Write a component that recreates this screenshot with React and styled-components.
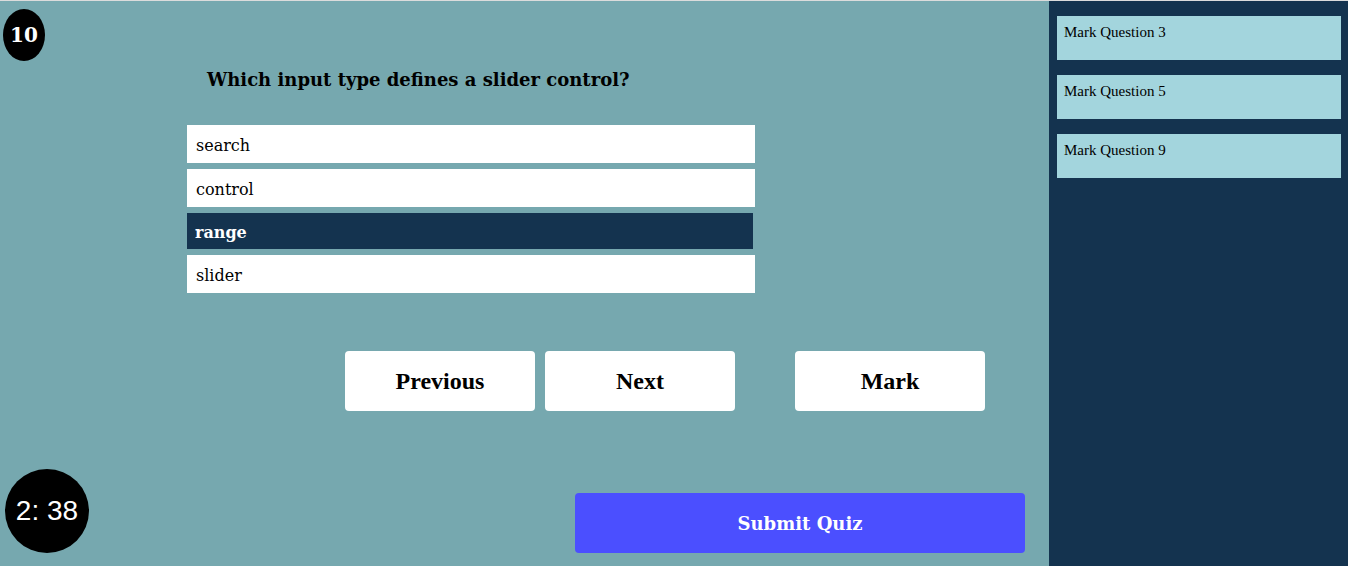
import React, { useState } from 'react';
import styled, { createGlobalStyle } from 'styled-components';

const GlobalStyle = createGlobalStyle`
  html, body {
    margin: 0;
    padding: 0;
    background: #dcdcdc;
  }
  body {
    padding-top: 1px;
    font-family: "DejaVu Serif", "Liberation Serif", serif;
  }
`;

const Page = styled.div`
  display: flex;
  height: 565px;
  overflow: hidden;
`;

const Main = styled.main`
  flex: 1;
  display: flex;
  flex-direction: column;
  background: #76a8af;
`;

const Badge = styled.div`
  width: 42px;
  height: 52px;
  margin: 8px 0 0 3px;
  border-radius: 50%;
  background: #000;
  color: #fff;
  display: flex;
  align-items: center;
  justify-content: center;
  font-family: "DejaVu Serif", serif;
  font-weight: bold;
  font-size: 20px;
`;

const Question = styled.h2`
  margin: 8px 0 0 207px;
  font-size: 18px;
  line-height: 22px;
  font-weight: bold;
  color: #000;
`;

const Options = styled.div`
  display: flex;
  flex-direction: column;
  gap: 6px;
  margin: 34px 0 0 187px;
  width: 568px;
`;

const Option = styled.div`
  box-sizing: border-box;
  height: ${(p) => (p.$selected ? '36px' : '38px')};
  width: ${(p) => (p.$selected ? '566px' : '568px')};
  padding: 2px 0 0 ${(p) => (p.$selected ? '8px' : '9px')};
  display: flex;
  align-items: center;
  background: ${(p) => (p.$selected ? '#14334f' : '#fff')};
  color: ${(p) => (p.$selected ? '#fff' : '#000')};
  font-size: 16px;
  font-weight: ${(p) => (p.$selected ? 'bold' : 'normal')};
  cursor: pointer;
`;

const Controls = styled.div`
  display: flex;
  margin: 58px 0 0 345px;
  gap: 10px;
`;

const NavButton = styled.button`
  width: 190px;
  height: 60px;
  margin-left: ${(p) => (p.$spaced ? '50px' : '0')};
  border: none;
  border-radius: 4px;
  background: #fff;
  color: #000;
  font-family: "Liberation Serif", serif;
  font-weight: bold;
  font-size: 24px;
  cursor: pointer;
`;

const Footer = styled.div`
  margin-top: auto;
  display: flex;
  align-items: flex-end;
  padding: 0 0 13px 5px;
`;

const Timer = styled.div`
  width: 84px;
  height: 84px;
  border-radius: 50%;
  background: #000;
  color: #fff;
  display: flex;
  align-items: center;
  justify-content: center;
  font-family: "Liberation Sans", Arial, sans-serif;
  font-size: 28px;
`;

const SubmitButton = styled.button`
  width: 450px;
  height: 60px;
  margin-left: 486px;
  border: none;
  border-radius: 4px;
  background: #4b4fff;
  color: #fff;
  font-family: "DejaVu Serif", serif;
  font-weight: bold;
  font-size: 18px;
  cursor: pointer;
`;

const Sidebar = styled.aside`
  width: 299px;
  background: #14334f;
  display: flex;
  flex-direction: column;
  gap: 15px;
  padding: 15px 7px 0 8px;
  box-sizing: border-box;
`;

const MarkItem = styled.div`
  height: 44px;
  box-sizing: border-box;
  padding: 7px 7px;
  background: #a3d5dd;
  color: #000;
  font-family: "Liberation Serif", serif;
  font-size: 15px;
  line-height: 18px;
`;

const options = ['search', 'control', 'range', 'slider'];
const marked = [3, 5, 9];

export default function App() {
  const [selected, setSelected] = useState('range');

  return (
    <>
      <GlobalStyle />
      <Page>
        <Main>
          <Badge>10</Badge>
          <Question>Which input type defines a slider control?</Question>
          <Options>
            {options.map((opt) => (
              <Option
                key={opt}
                $selected={opt === selected}
                onClick={() => setSelected(opt)}
              >
                {opt}
              </Option>
            ))}
          </Options>
          <Controls>
            <NavButton>Previous</NavButton>
            <NavButton>Next</NavButton>
            <NavButton $spaced>Mark</NavButton>
          </Controls>
          <Footer>
            <Timer>2:&nbsp;38</Timer>
            <SubmitButton>Submit Quiz</SubmitButton>
          </Footer>
        </Main>
        <Sidebar>
          {marked.map((n) => (
            <MarkItem key={n}>Mark Question {n}</MarkItem>
          ))}
        </Sidebar>
      </Page>
    </>
  );
}
